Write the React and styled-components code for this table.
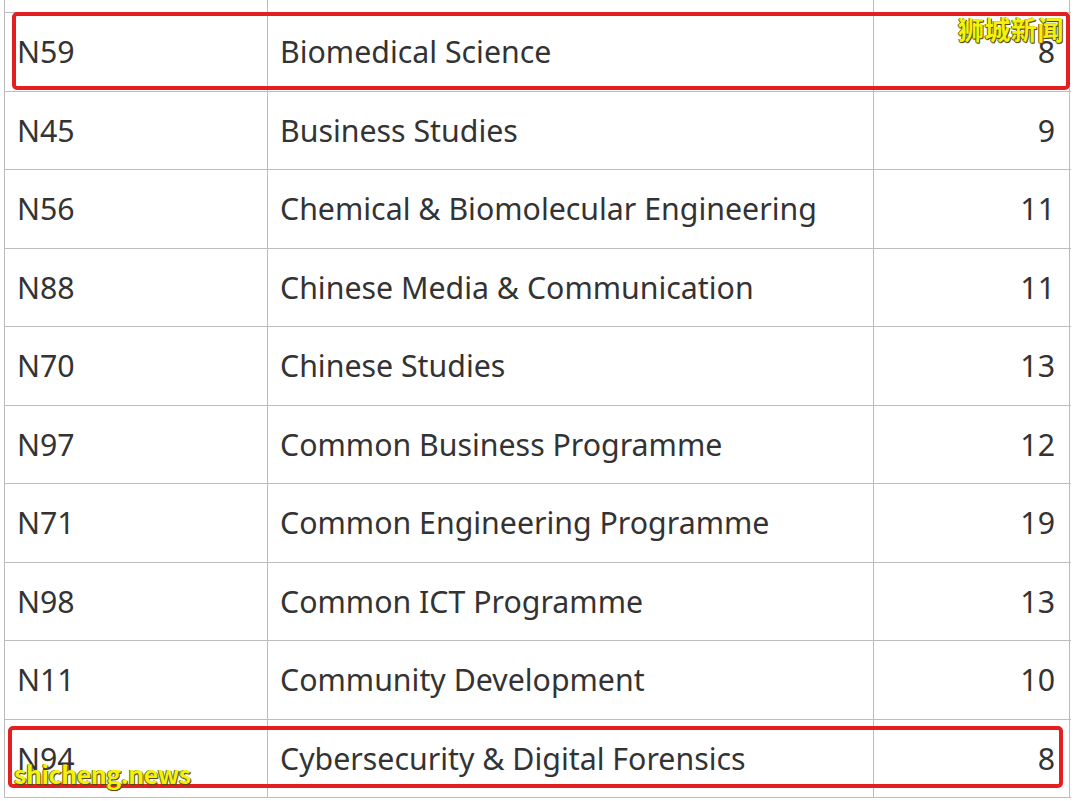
import React from 'react'
import styled, { createGlobalStyle } from 'styled-components'

const rows = [
    { code: 'N59', name: 'Biomedical Science', count: 8 },
    { code: 'N45', name: 'Business Studies', count: 9 },
    { code: 'N56', name: 'Chemical & Biomolecular Engineering', count: 11 },
    { code: 'N88', name: 'Chinese Media & Communication', count: 11 },
    { code: 'N70', name: 'Chinese Studies', count: 13 },
    { code: 'N97', name: 'Common Business Programme', count: 12 },
    { code: 'N71', name: 'Common Engineering Programme', count: 19 },
    { code: 'N98', name: 'Common ICT Programme', count: 13 },
    { code: 'N11', name: 'Community Development', count: 10 },
    { code: 'N94', name: 'Cybersecurity & Digital Forensics', count: 8 },
]

const GlobalStyle = createGlobalStyle`
    html, body {
        margin: 0;
        padding: 0;
        background: #ffffff;
    }
`

const Page = styled.div`
    position: relative;
    width: 1080px;
    height: 801px;
    overflow: hidden;
    background: #ffffff;
    padding-left: 4px;
    box-sizing: border-box;
    font-family: "Noto Sans", "Open Sans", sans-serif;
    color: #333333;
`

const Table = styled.div`
    width: 1066px;
    border-left: 1px solid #bdbdbd;
`

const Row = styled.div`
    display: grid;
    grid-template-columns: 263px 606px 196px;
    height: ${props => props.height || '78.5px'};
    border-bottom: 1px solid #bdbdbd;
    box-sizing: border-box;
`

const Cell = styled.div`
    display: flex;
    align-items: center;
    justify-content: ${props => props.right ? 'flex-end' : 'flex-start'};
    padding: ${props => props.right ? '0 14px 0 0' : `0 0 0 ${props.padLeft || '12px'}`};
    border-right: 1px solid #bdbdbd;
    font-size: 30.3px;
    white-space: nowrap;
    overflow: hidden;
`

const Highlight = styled.div`
    position: absolute;
    left: ${props => props.left}px;
    top: ${props => props.top}px;
    width: ${props => props.width}px;
    height: ${props => props.height}px;
    border: 4px solid #e3201f;
    border-radius: 5px;
    box-sizing: border-box;
    pointer-events: none;
`

const Watermark = styled.div`
    position: absolute;
    left: ${props => props.left}px;
    top: ${props => props.top}px;
    color: #f2f20a;
    font-size: ${props => props.size}px;
    font-weight: 600;
    font-family: "Noto Sans CJK SC", "Noto Sans", sans-serif;
    line-height: 1;
    white-space: nowrap;
    text-shadow: 1px 1px 0 #5a4a00, -1px 0 0 #7a6a10, 0 1px 1px #4a3c00;
    letter-spacing: ${props => props.spacing || 0}px;
`

export default function App() {
    return (
        <Page>
            <GlobalStyle />
            <Table>
                <Row height="13px">
                    <Cell />
                    <Cell />
                    <Cell />
                </Row>
                {rows.map(r => (
                    <Row key={r.code}>
                        <Cell>{r.code}</Cell>
                        <Cell padLeft="12px">{r.name}</Cell>
                        <Cell right>{r.count}</Cell>
                    </Row>
                ))}
            </Table>

            <Highlight left={12} top={12} width={1058} height={78} />
            <Highlight left={8} top={726} width={1055} height={62} />

            <Watermark left={958} top={16} size={26} spacing={0.5}>狮城新闻</Watermark>
            <Watermark left={14} top={761} size={25} spacing={-0.5}>shicheng.news</Watermark>
        </Page>
    )
}
